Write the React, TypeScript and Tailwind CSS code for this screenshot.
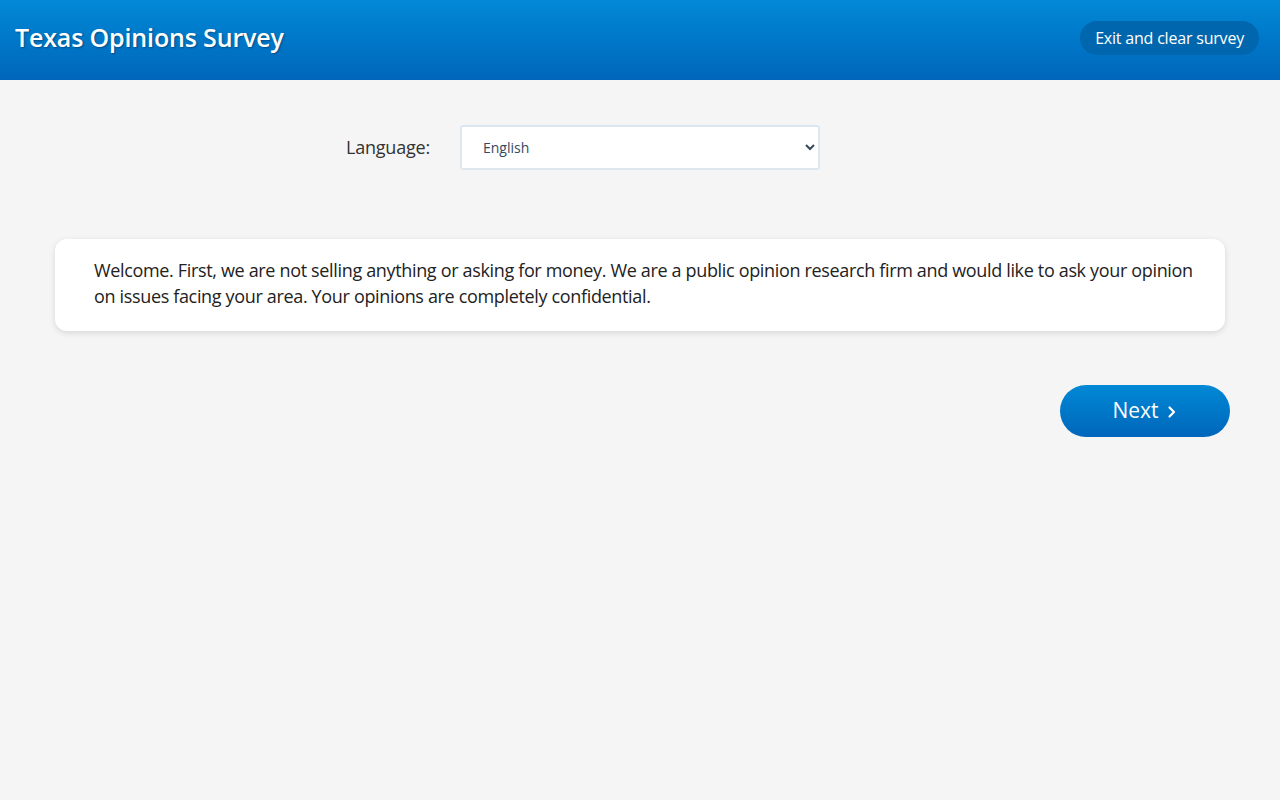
import { useState } from "react";

function ChevronRight() {
  return (
    <svg width="12" height="16" viewBox="0 0 12 16" fill="none" className="ml-[7px] mt-[1px]">
      <path d="M3.5 3.5L8 8l-4.5 4.5" stroke="white" strokeWidth="2.2" strokeLinecap="round" strokeLinejoin="round" />
    </svg>
  );
}

export default function App() {
  const [lang, setLang] = useState("en");
  return (
    <div className="min-h-screen bg-[#f5f5f5] font-['Open_Sans',sans-serif] text-[#222]">
      <header className="flex h-20 items-center justify-between bg-gradient-to-b from-[#0289d6] to-[#0066bb] px-[15px] pb-[4px]">
        <h1 className="text-[25px] font-semibold tracking-[-0.15px] text-white [text-shadow:1px_1px_2px_rgba(0,0,0,0.35)]">
          Texas Opinions Survey
        </h1>
        <button className="mr-[6px] h-[34px] rounded-full bg-[#0067ae] px-[15px] text-[16px] tracking-[-0.2px] text-white">
          Exit and clear survey
        </button>
      </header>

      <main className="px-[55px]">
        <div className="flex items-center pt-[45px]">
          <label htmlFor="lang" className="w-[375px] text-right text-[18px] tracking-[-0.2px] text-[#333]">
            Language:
          </label>
          <select
            id="lang"
            value={lang}
            onChange={(e) => setLang(e.target.value)}
            className="ml-[30px] h-[45px] w-[360px] rounded-[3px] border-2 border-[#dde7f0] bg-white pl-[17px] pr-2 text-[14px] text-[#34495e]"
          >
            <option value="en">English</option>
            <option value="es">Español</option>
          </select>
        </div>

        <section className="mt-[69px] rounded-[12px] bg-white pt-[18px] pb-[22px] pl-[39px] pr-[30px] shadow-[0_2px_6px_rgba(0,0,0,0.12)]">
          <p className="text-[18px] leading-[26px] tracking-[-0.34px] text-[#222]">
            Welcome. First, we are not selling anything or asking for money. We are a public opinion research firm and would like to ask your opinion on issues facing your area. Your opinions are completely confidential.
          </p>
        </section>

        <div className="mt-[54px] mr-[-5px] flex justify-end">
          <button className="flex h-[52px] w-[170px] items-center justify-center rounded-full bg-gradient-to-b from-[#0289d6] to-[#0066bb] text-[21px] text-white">
            Next
            <ChevronRight />
          </button>
        </div>
      </main>
    </div>
  );
}
